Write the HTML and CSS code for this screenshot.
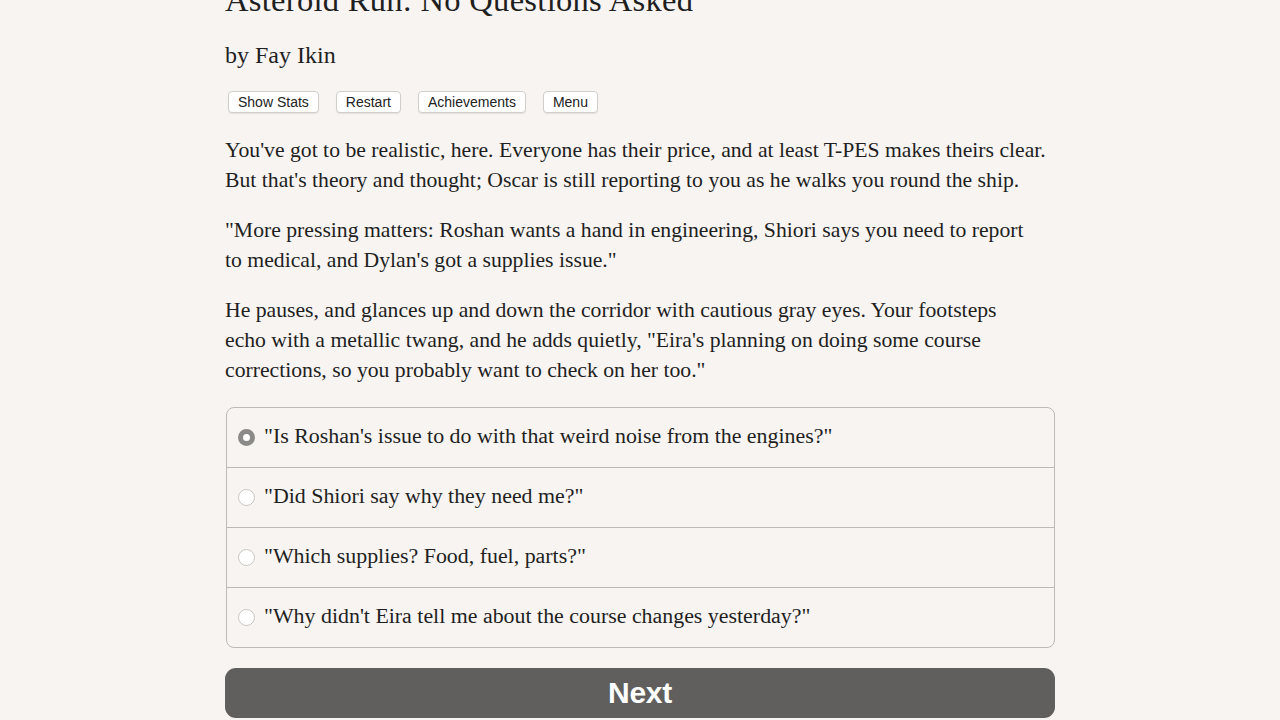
FILE: index.html
```html
<!DOCTYPE html>
<html>
<head>
<meta charset="utf-8">
<link rel="stylesheet" href="styles.css">
</head>
<body>
<div class="container">
  <h1 class="title">Asteroid Run: No Questions Asked</h1>
  <h2 class="author">by Fay Ikin</h2>
  <div class="buttons">
    <button class="btn">Show Stats</button>
    <button class="btn">Restart</button>
    <button class="btn">Achievements</button>
    <button class="btn">Menu</button>
  </div>
  <div class="text">
    <p>You've got to be realistic, here. Everyone has their price, and at least T-PES makes theirs clear.<br>But that's theory and thought; Oscar is still reporting to you as he walks you round the ship.</p>
    <p>"More pressing matters: Roshan wants a hand in engineering, Shiori says you need to report<br>to medical, and Dylan's got a supplies issue."</p>
    <p>He pauses, and glances up and down the corridor with cautious gray eyes. Your footsteps<br>echo with a metallic twang, and he adds quietly, "Eira's planning on doing some course<br>corrections, so you probably want to check on her too."</p>
  </div>
  <div class="choices">
    <div class="choice"><span class="radio checked"></span><span class="label">"Is Roshan's issue to do with that weird noise from the engines?"</span></div>
    <div class="choice"><span class="radio"></span><span class="label">"Did Shiori say why they need me?"</span></div>
    <div class="choice"><span class="radio"></span><span class="label">"Which supplies? Food, fuel, parts?"</span></div>
    <div class="choice"><span class="radio"></span><span class="label">"Why didn't Eira tell me about the course changes yesterday?"</span></div>
  </div>
  <button class="next">Next</button>
</div>
</body>
</html>
```

FILE: styles.css
```css
html, body {
  margin: 0;
  padding: 0;
  background: #f7f4f1;
  overflow: hidden;
}
body {
  font-family: "Liberation Serif", "DejaVu Serif", serif;
  color: #1f1f1f;
}
.container {
  width: 830px;
  margin-left: 225px;
  margin-top: -20px;
}
.title {
  font-weight: normal;
  font-size: 32.5px;
  line-height: 40px;
  margin: 0;
  letter-spacing: 0.3px;
}
.author {
  font-weight: normal;
  font-size: 24px;
  line-height: 30px;
  margin: 20px 0 0 0;
}
.buttons {
  display: flex;
  gap: 17px;
  margin: 21px 0 0 3px;
}
.btn {
  font-family: "Liberation Sans", Arial, sans-serif;
  font-size: 14px;
  color: #222;
  background: #fff;
  border: 1px solid #d2cfcb;
  border-radius: 4px;
  height: 22px;
  padding: 0 9px;
  line-height: 20px;
  box-shadow: 0 1px 1px rgba(0,0,0,0.08);
}
.text {
  margin-top: 22px;
}
.text p {
  font-size: 21.7px;
  line-height: 30px;
  margin: 0 0 20px 0;
}
.choices {
  margin-top: 22px;
  border: 1px solid #bdb9b5;
  border-radius: 8px;
  margin-left: 1px;
}
.choice {
  height: 59px;
  display: flex;
  align-items: center;
  border-top: 1px solid #bdb9b5;
  font-size: 21.9px;
}
.choice:first-child {
  border-top: none;
}
.label {
  position: relative;
  top: -2px;
}
.radio {
  width: 17px;
  height: 17px;
  border-radius: 50%;
  box-sizing: border-box;
  border: 1px solid #c8c5c2;
  background: #fff;
  margin-left: 11px;
  margin-right: 9px;
  flex: none;
}
.radio.checked {
  background: #fff;
  border: 5px solid #8b8a89;
}
.next {
  display: block;
  width: 830px;
  margin: 20px 0 0 0;
  height: 50px;
  border: none;
  border-radius: 11px;
  background: #605f5e;
  color: #fff;
  font-family: "Liberation Sans", Arial, sans-serif;
  font-weight: bold;
  font-size: 30px;
  letter-spacing: -0.3px;
}
```
